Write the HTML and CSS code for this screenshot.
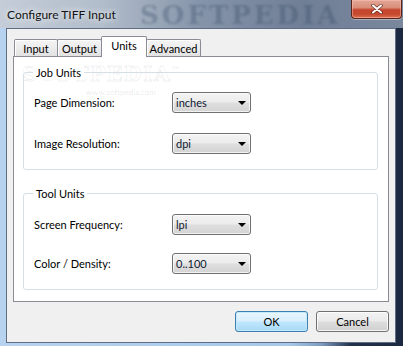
FILE: index.html
```html
<!DOCTYPE html>
<html lang="en">
  <head>
    <meta charset="UTF-8" />
    <title>Configure TIFF Input</title>
    <link rel="stylesheet" href="styles.css">
  </head>
  <body>
    <div class="window">
      <div class="titlebar">
        <span class="title">Configure TIFF Input</span>
        <span class="title-mark">SOFTPEDIA</span>
        <div class="close">
          <svg width="12" height="10" viewBox="0 0 12 10">
            <path d="M2 1.5 L10 8.5 M10 1.5 L2 8.5" stroke="#4a1a12" stroke-width="3.6" stroke-linecap="round" opacity="0.7" />
            <path d="M2 1.5 L10 8.5 M10 1.5 L2 8.5" stroke="#ffffff" stroke-width="2" stroke-linecap="round" />
          </svg>
        </div>
      </div>

      <div class="client">
        <div class="tabs">
          <div class="tab tab-input">Input</div>
          <div class="tab tab-output">Output</div>
          <div class="tab tab-units active">Units</div>
          <div class="tab tab-advanced">Advanced</div>
        </div>

        <div class="panel">
          <span class="panel-mark">SOFTPEDIA<sup>™</sup></span>
          <span class="panel-url">www.softpedia.com</span>

          <div class="group job">
            <div class="group-title">Job Units</div>
            <div class="row">
              <span class="label">Page Dimension:</span>
              <div class="combo"><span>inches</span><i class="arrow"></i></div>
            </div>
            <div class="row">
              <span class="label">Image Resolution:</span>
              <div class="combo"><span>dpi</span><i class="arrow"></i></div>
            </div>
          </div>

          <div class="group tool">
            <div class="group-title">Tool Units</div>
            <div class="row">
              <span class="label">Screen Frequency:</span>
              <div class="combo"><span>lpi</span><i class="arrow"></i></div>
            </div>
            <div class="row">
              <span class="label">Color / Density:</span>
              <div class="combo"><span>0..100</span><i class="arrow"></i></div>
            </div>
          </div>
        </div>

        <div class="buttons">
          <div class="btn default">OK</div>
          <div class="btn">Cancel</div>
        </div>
      </div>
    </div>
  </body>
</html>
```

FILE: styles.css
```css
body {
  margin: 0;
  font-family: Lato, "Noto Sans", sans-serif;
  font-size: 11px;
  color: #000;
}
.window {
  width: 403px;
  height: 346px;
  display: flex;
  flex-direction: column;
  overflow: hidden;
  background: linear-gradient(to right, #b7d3ef 0%, #a8c8e9 72%, #7b98bd 80%, #22314c 87%, #1b283f 100%);
}
.titlebar {
  position: relative;
  height: 28px;
  flex-shrink: 0;
  display: flex;
  align-items: center;
  padding-left: 7px;
  background: linear-gradient(to right, #c4cdd8 0%, #b2bdcb 25%, #8594a9 50%, #707f96 75%, #7a889e 100%);
}
.title {
  position: relative;
  z-index: 1;
  font-size: 12px;
  color: #141414;
  text-shadow: 0 0 6px rgba(255, 255, 255, 0.9), 0 0 10px rgba(255, 255, 255, 0.6);
}
.title-mark {
  position: absolute;
  left: 140px;
  top: 0;
  font-family: "DejaVu Serif", serif;
  font-size: 26px;
  font-weight: bold;
  letter-spacing: 3px;
  color: rgba(48, 66, 96, 0.3);
  filter: blur(1.2px);
}
.close {
  position: absolute;
  right: 1px;
  top: 0;
  width: 51px;
  height: 19px;
  box-sizing: border-box;
  display: flex;
  align-items: center;
  justify-content: center;
  border: 1px solid #5b2218;
  border-top: none;
  border-radius: 0 0 4px 4px;
  box-shadow: inset 0 0 0 1px rgba(255, 200, 190, 0.45), 0 1px 0 rgba(255, 255, 255, 0.35);
  background: linear-gradient(#e3a796 0%, #d98e7a 42%, #c4452c 55%, #c64a30 80%, #dd7452 100%);
}

/* client area */
.client {
  flex: 1;
  margin: 0 7px 3px 6px;
  border: 1px solid #5f6e84;
  background: #f0f0f0;
  display: flex;
  flex-direction: column;
  padding: 7px 6px 0 6px;
}
.tabs {
  display: flex;
  align-items: flex-end;
  height: 20px;
  padding-left: 1px;
}
.tab {
  height: 17px;
  box-sizing: border-box;
  display: flex;
  align-items: center;
  justify-content: center;
  border: 1px solid #898c95;
  border-bottom: none;
  border-radius: 2px 2px 0 0;
  margin-left: -1px;
  padding-top: 1px;
  background: linear-gradient(#f4f4f4 0%, #ececec 50%, #e2e2e2 100%);
  box-shadow: inset 1px 1px 0 #fff;
}
.tab:first-child {
  margin-left: 0;
}
.tab-input { width: 44px; }
.tab-output { width: 45px; }
.tab-units { width: 46px; }
.tab-advanced { width: 55px; }
.tab.active {
  position: relative;
  z-index: 1;
  height: 21px;
  margin-bottom: -1px;
  padding-top: 0;
  padding-bottom: 3px;
  background: #fff;
  box-shadow: none;
}
.panel {
  position: relative;
  height: 246px;
  box-sizing: border-box;
  border: 1px solid #898c95;
  background: #fff;
  padding: 15px 10px 0 9px;
}
.panel-mark {
  position: absolute;
  left: 8px;
  top: 7px;
  line-height: 19px;
  font-family: "DejaVu Serif", serif;
  font-size: 21px;
  font-weight: bold;
  letter-spacing: 1px;
  color: transparent;
  -webkit-text-stroke: 1px rgba(0, 0, 0, 0.07);
}
.panel-mark sup {
  font-size: 9px;
  line-height: 0;
  -webkit-text-stroke: 0;
  color: rgba(0, 0, 0, 0.1);
}
.panel-url {
  position: absolute;
  left: 72px;
  top: 31px;
  font-size: 8px;
  line-height: 9px;
  color: rgba(0, 0, 0, 0.1);
}

/* group boxes */
.group {
  position: relative;
  border: 1px solid #d5dfe5;
  border-radius: 3px;
  display: flex;
  flex-direction: column;
  padding: 19px 10px 15px 10px;
  gap: 20px;
}
.group.tool {
  margin-top: 23px;
  padding-top: 20px;
  gap: 18px;
}
.group-title {
  position: absolute;
  left: 9px;
  top: -8px;
  padding: 0 3px;
  background: #fff;
  line-height: 15px;
}
.row {
  display: flex;
  align-items: center;
}
.label {
  width: 138px;
  flex-shrink: 0;
}
.combo {
  width: 79px;
  height: 21px;
  box-sizing: border-box;
  display: flex;
  align-items: center;
  justify-content: space-between;
  padding: 0 4px 0 3px;
  border: 1px solid #707070;
  border-radius: 3px;
  color: #0e1830;
  background: linear-gradient(#f3f3f3 0%, #ececec 45%, #dedede 55%, #d3d3d3 100%);
  box-shadow: inset 0 0 0 1px rgba(255, 255, 255, 0.7);
}
.arrow {
  width: 0;
  height: 0;
  border-left: 4px solid transparent;
  border-right: 4px solid transparent;
  border-top: 4px solid #000;
  margin-top: 1px;
}

/* dialog buttons */
.buttons {
  display: flex;
  justify-content: flex-end;
  gap: 8px;
  margin-top: 9px;
}
.btn {
  width: 73px;
  height: 21px;
  box-sizing: border-box;
  display: flex;
  align-items: center;
  justify-content: center;
  border: 1px solid #707070;
  border-radius: 3px;
  background: linear-gradient(#f2f2f2 0%, #ebebeb 45%, #dddddd 55%, #cfcfcf 100%);
  box-shadow: inset 0 0 0 1px rgba(255, 255, 255, 0.8);
}
.btn.default {
  border-color: #3c7fb1;
  background: linear-gradient(#eaf6fd 0%, #d9f0fc 45%, #bee6fd 55%, #a7d9f5 100%);
  box-shadow: inset 0 0 0 1px #c6e9fb;
}
```
